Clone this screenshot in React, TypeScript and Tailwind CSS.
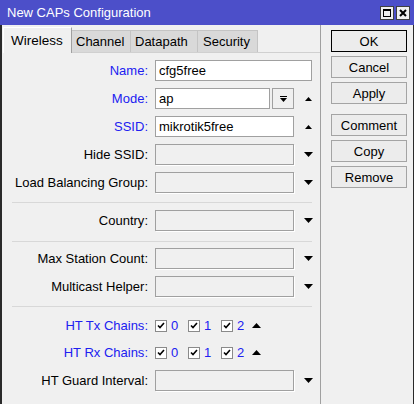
import React from "react";

const BLUE = "text-[#2020f0]";

function DownArrow() {
  return (
    <svg width="9" height="5" viewBox="0 0 9 5" className="block">
      <path d="M0 0H9L4.5 5Z" fill="#000" />
    </svg>
  );
}

function UpArrow({ small }: { small?: boolean }) {
  if (small) {
    return (
      <svg width="7" height="4" viewBox="0 0 7 4" className="block">
        <path d="M0 4H7L3.5 0Z" fill="#000" />
      </svg>
    );
  }
  return (
    <svg width="9" height="5" viewBox="0 0 9 5" className="block">
      <path d="M0 5H9L4.5 0Z" fill="#000" />
    </svg>
  );
}

function Check() {
  return (
    <div className="w-[12px] h-[12px] border border-[#8a8a8a] bg-white flex items-center justify-center">
      <svg width="8" height="7" viewBox="0 0 8 7">
        <path d="M1 3.5L3 5.5L7 1" stroke="#000" strokeWidth="1.6" fill="none" />
      </svg>
    </div>
  );
}

function Label({ text, blue }: { text: string; blue?: boolean }) {
  return (
    <div className={`w-[146px] shrink-0 text-right pr-[1px] whitespace-nowrap ${blue ? BLUE : "text-black"}`}>
      {text}:
    </div>
  );
}

function TextField({ value, width }: { value?: string; width: string }) {
  return (
    <div className={`${width} h-[21px] border border-[#a0a0a0] bg-white flex items-center pl-[3px] text-black`}>
      {value}
    </div>
  );
}

function EmptyField() {
  return (
    <div className="w-[139px] h-[21px] border border-[#a0a0a0] bg-[#f0f0f0] shadow-[1px_1px_0_#ffffff]" />
  );
}

function ArrowCol({ children }: { children: React.ReactNode }) {
  return <div className="w-[17px] flex justify-center">{children}</div>;
}

function Row({ mt, children }: { mt: string; children: React.ReactNode }) {
  return <div className={`flex items-center gap-[6px] h-[21px] ${mt}`}>{children}</div>;
}

function Sep({ mt }: { mt: string }) {
  return <div className={`h-px bg-[#d8d8d8] ml-[9px] w-[300px] ${mt}`} />;
}

function Chains({ label, mt }: { label: string; mt: string }) {
  return (
    <Row mt={mt}>
      <Label text={label} blue />
      <div className="flex items-center">
        {["0", "1", "2"].map((n, i) => (
          <div key={n} className={`flex items-center gap-[4px] ${i < 2 ? "w-[33px]" : ""}`}>
            <Check />
            <span className={BLUE}>{n}</span>
          </div>
        ))}
        <div className="ml-[8px]">
          <UpArrow />
        </div>
      </div>
    </Row>
  );
}

function Btn({ label, primary, mt }: { label: string; primary?: boolean; mt: string }) {
  return (
    <div
      className={`w-[76px] h-[22px] flex items-center justify-center text-black bg-[#ececec] border ${
        primary ? "border-black" : "border-[#a4a4a4]"
      } ${mt}`}
    >
      {label}
    </div>
  );
}

export default function App() {
  return (
    <div className="w-[414px] h-[404px] overflow-hidden bg-[#f0f0f0] flex flex-col text-[13px] leading-none font-['Liberation_Sans',Arial,sans-serif]">
      {/* Title bar */}
      <div className="h-[25px] shrink-0 bg-[#4c4fc9] flex items-center pl-[7px] pr-[4px]">
        <span className="text-white text-[13px] flex-1">New CAPs Configuration</span>
        <div className="flex gap-[2px]">
          <div className="w-[14px] h-[14px] bg-[#f0f0f0] border border-[#404040] flex items-center justify-center">
            <div className="w-[8px] h-[8px] border border-black border-t-2" />
          </div>
          <div className="w-[14px] h-[14px] bg-[#f0f0f0] border border-[#404040] flex items-center justify-center">
            <svg width="8" height="8" viewBox="0 0 8 8">
              <path d="M1 1L7 7M7 1L1 7" stroke="#000" strokeWidth="2" />
            </svg>
          </div>
        </div>
      </div>

      {/* Body */}
      <div className="flex-1 flex border-l-2 border-r border-[#2a2a2a]">
        <div className="w-[318px] ml-px flex flex-col border-r border-[#a0a0a0]">
          {/* Tabs */}
          <div className="flex items-end h-[27px] pt-[2px] shrink-0">
            <div className="relative z-10 w-[69px] h-[26px] -mb-px bg-[#f0f0f0] border-l border-t border-white border-r border-r-[#a0a0a0] flex items-center pl-[7px] text-black text-[13.5px]">
              Wireless
            </div>
            <div className="w-[59px] h-[22px] bg-[#d9d9d9] border-t border-r border-[#c4c4c4] flex items-center pl-[4px] text-black">
              Channel
            </div>
            <div className="w-[67px] h-[22px] bg-[#d9d9d9] border-t border-r border-[#c4c4c4] flex items-center pl-[4px] text-black">
              Datapath
            </div>
            <div className="w-[60px] h-[22px] bg-[#d9d9d9] border-t border-r border-[#c4c4c4] flex items-center pl-[5px] text-black">
              Security
            </div>
          </div>

          {/* Panel */}
          <div className="flex-1 border-t border-[#d0d0d0] flex flex-col">
            <Row mt="mt-[7px]">
              <Label text="Name" blue />
              <TextField value="cfg5free" width="w-[157px]" />
            </Row>
            <Row mt="mt-[7px]">
              <Label text="Mode" blue />
              <div className="flex gap-[2px]">
                <TextField value="ap" width="w-[115px]" />
                <div className="w-[22px] h-[21px] border border-[#a0a0a0] bg-[#f0f0f0] flex items-center justify-center">
                  <svg width="7" height="6" viewBox="0 0 7 6">
                    <path d="M0 0.5H7" stroke="#000" strokeWidth="1" />
                    <path d="M0 2H7L3.5 6Z" fill="#000" />
                  </svg>
                </div>
              </div>
              <ArrowCol>
                <UpArrow small />
              </ArrowCol>
            </Row>
            <Row mt="mt-[7px]">
              <Label text="SSID" blue />
              <TextField value="mikrotik5free" width="w-[139px]" />
              <ArrowCol>
                <UpArrow small />
              </ArrowCol>
            </Row>
            <Row mt="mt-[7px]">
              <Label text="Hide SSID" />
              <EmptyField />
              <ArrowCol>
                <DownArrow />
              </ArrowCol>
            </Row>
            <Row mt="mt-[7px]">
              <Label text="Load Balancing Group" />
              <EmptyField />
              <ArrowCol>
                <DownArrow />
              </ArrowCol>
            </Row>
            <Sep mt="mt-[9px]" />
            <Row mt="mt-[7px]">
              <Label text="Country" />
              <EmptyField />
              <ArrowCol>
                <DownArrow />
              </ArrowCol>
            </Row>
            <Sep mt="mt-[10px]" />
            <Row mt="mt-[6px]">
              <Label text="Max Station Count" />
              <EmptyField />
              <ArrowCol>
                <DownArrow />
              </ArrowCol>
            </Row>
            <Row mt="mt-[7px]">
              <Label text="Multicast Helper" />
              <EmptyField />
              <ArrowCol>
                <DownArrow />
              </ArrowCol>
            </Row>
            <Sep mt="mt-[9px]" />
            <Chains label="HT Tx Chains" mt="mt-[8px]" />
            <Chains label="HT Rx Chains" mt="mt-[6px]" />
            <Row mt="mt-[7px]">
              <Label text="HT Guard Interval" />
              <EmptyField />
              <ArrowCol>
                <DownArrow />
              </ArrowCol>
            </Row>
          </div>
        </div>

        {/* Buttons */}
        <div className="flex flex-col ml-[10px] pt-[5px]">
          <Btn label="OK" primary mt="" />
          <Btn label="Cancel" mt="mt-[4px]" />
          <Btn label="Apply" mt="mt-[4px]" />
          <Btn label="Comment" mt="mt-[10px]" />
          <Btn label="Copy" mt="mt-[4px]" />
          <Btn label="Remove" mt="mt-[4px]" />
        </div>
      </div>
    </div>
  );
}
